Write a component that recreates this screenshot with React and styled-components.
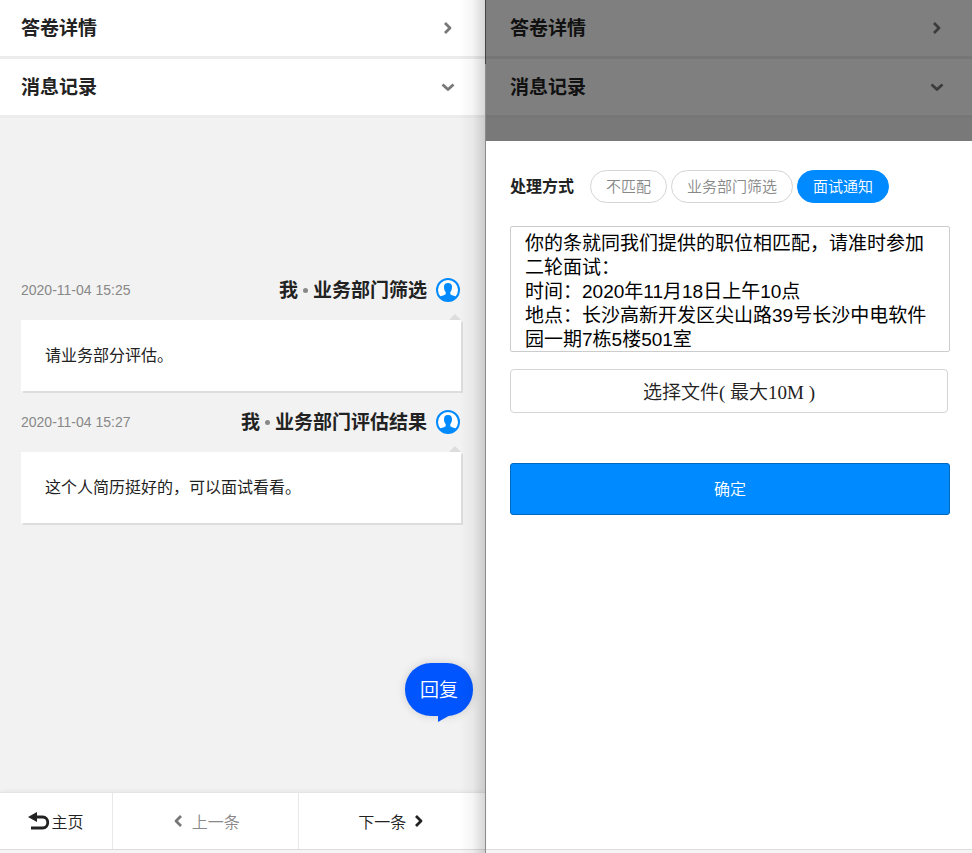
import React, { useState } from "react";
import styled, { createGlobalStyle } from "styled-components";

const GlobalStyle = createGlobalStyle`
  * {
    box-sizing: border-box;
  }

  body {
    margin: 0;
    color: #222;
    background-color: #fff;
    font-family: "Liberation Sans", "Noto Sans CJK SC", sans-serif;
  }

  button,
  textarea {
    margin: 0;
    color: inherit;
    font-family: inherit;
  }
`;

const Page = styled.main`
  display: grid;
  grid-template-columns: 1fr 1fr;
  min-height: 100vh;
`;

const Screen = styled.section`
  display: flex;
  flex-direction: column;
  min-width: 0;
`;

const MessageScreen = styled(Screen)`
  position: relative;
  padding-right: 1px;
  background-color: #f2f2f2;

  /* divider line and its soft shadow */
  &::after {
    content: "";
    position: absolute;
    top: 0;
    right: 0;
    bottom: 0;
    width: 27px;
    pointer-events: none;
    background:
      linear-gradient(#444 64px, #8c8c8c 64px) right / 1px 100% no-repeat,
      linear-gradient(
        to right,
        rgba(0, 0, 0, 0),
        rgba(0, 0, 0, 0.04) 50%,
        rgba(0, 0, 0, 0.17)
      );
  }
`;

const SectionButton = styled.button`
  display: flex;
  justify-content: space-between;
  align-items: center;
  width: 100%;
  height: 59px;
  padding: ${({ $inset }) => ($inset ? "0 28px 0 24px" : "0 30px 0 21px")};
  border: 0;
  border-bottom: 3px solid #ececec;
  background-color: #fff;
  cursor: pointer;
`;

const SectionTitle = styled.span`
  padding-bottom: 3px;
  font-size: 19px;
  font-weight: 600;
`;

const Backdrop = styled.div`
  position: relative;
  height: 141px;
  background-color: #f2f2f2;

  &::after {
    content: "";
    position: absolute;
    inset: 0;
    background-color: rgba(0, 0, 0, 0.5);
  }
`;

const Messages = styled.div`
  position: relative;
  flex: 1;
  display: flex;
  flex-direction: column;
  gap: 19px;
  padding: 160px 24px 0 21px;
`;

const Message = styled.article`
  display: flex;
  flex-direction: column;
  gap: 18px;
`;

const MessageHead = styled.header`
  display: flex;
  align-items: center;
  height: 24px;
  padding-right: 1px;
`;

const Time = styled.time`
  flex: 1;
  color: #888;
  font-size: 14px;
`;

const Author = styled.h3`
  display: flex;
  align-items: center;
  gap: 5px;
  margin: 0 9px 0 0;
  padding-bottom: 3px;
  font-size: 19px;
  font-weight: 600;
`;

const Dot = styled.span`
  width: 5px;
  height: 5px;
  margin-top: 4px;
  border-radius: 50%;
  background-color: #888;
`;

const Bubble = styled.p`
  position: relative;
  margin: 0;
  padding: 24px;
  background-color: #fff;
  box-shadow: 2px 2px 0 #ddd;
  font-size: 16px;
  line-height: 23px;

  &::before {
    content: "";
    position: absolute;
    right: 0;
    bottom: 100%;
    border: 6px solid transparent;
    border-top: 0;
    border-bottom-color: #ddd;
  }
`;

const ReplyButton = styled.button`
  position: absolute;
  right: 12px;
  bottom: 76px;
  width: 68px;
  height: 53px;
  padding: 0 0 2px;
  border: 0;
  border-radius: 26px;
  background-color: #0055ff;
  color: #fff;
  font-size: 19px;
  font-weight: 350;
  box-shadow: 0 0 10px rgba(0, 0, 0, 0.15);
  cursor: pointer;

  &::after {
    content: "";
    position: absolute;
    top: 51px;
    left: 33px;
    border-top: 8px solid #0055ff;
    border-right: 14px solid transparent;
  }
`;

const BottomNav = styled.nav`
  display: grid;
  grid-template-columns: 3fr 5fr 5fr;
  border-top: 1px solid #e4e4e4;
  background-color: #fff;
  box-shadow: 0 -1px 4px rgba(0, 0, 0, 0.05);
`;

const NavLink = styled.a`
  display: flex;
  justify-content: center;
  align-items: center;
  gap: ${({ $gap }) => $gap}px;
  height: 56px;
  border-left: 1px solid #e8e8e8;
  color: ${({ $muted }) => ($muted ? "#888" : "#222")};
  font-size: 16px;
  font-weight: 350;
  text-decoration: none;

  &:first-child {
    border-left: 0;
  }
`;

const PageEdge = styled.div`
  height: 4px;
  border-top: 1px solid #ddd;
  background-color: #f5f5f5;
`;

const Sheet = styled.form`
  flex: 1;
  display: flex;
  flex-direction: column;
  padding: 29px 22px 0 24px;
  background-color: #fff;
`;

const MethodRow = styled.div`
  display: flex;
  align-items: center;
  gap: 16px;
`;

const MethodLabel = styled.span`
  padding-bottom: 3px;
  font-size: 16px;
  font-weight: 600;
`;

const Chips = styled.div`
  display: flex;
  gap: 4px;
`;

const Chip = styled.label`
  position: relative;
  display: flex;
  align-items: center;
  height: 33px;
  padding: 0 15px 2px;
  border: 1px solid #d4d4d4;
  border-radius: 17px;
  color: #888;
  font-size: 15px;
  font-weight: 350;
  white-space: nowrap;
  cursor: pointer;

  &:has(input:checked) {
    border-color: #008aff;
    background-color: #008aff;
    color: #fff;
  }
`;

const ChipInput = styled.input`
  position: absolute;
  inset: 0;
  width: 100%;
  height: 100%;
  margin: 0;
  opacity: 0;
`;

const Notice = styled.textarea`
  height: 126px;
  margin-top: 23px;
  padding: 5px 14px 0;
  border: 1px solid #ccc;
  border-radius: 2px;
  background-color: #fff;
  color: #000;
  font-size: 19px;
  line-height: 24px;
  resize: none;
  overflow: hidden;
`;

const FileButton = styled.button`
  height: 44px;
  margin: 17px 2px 0 0;
  padding-bottom: 3px;
  border: 1px solid #d4d4d4;
  border-radius: 4px;
  background-color: #fff;
  font-family: "Liberation Serif", "Noto Sans CJK SC", serif;
  font-size: 19px;
  font-weight: 350;
  cursor: pointer;
`;

const SubmitButton = styled.button`
  height: 52px;
  margin-top: 50px;
  padding-bottom: 3px;
  border: 1px solid #0068bd;
  border-radius: 3px;
  background-color: #008aff;
  color: #fff;
  font-size: 16px;
  font-weight: 350;
  cursor: pointer;
`;

const chevrons = {
  right: "M4 2 L9 7 L4 12",
  left: "M9 2 L4 7 L9 12",
  down: "M1.500 4.500 L7 9.500 L12.500 4.500",
};

function Chevron({ direction, color = "#777" }) {
  return (
    <svg width="14" height="14" viewBox="0 0 14 14" aria-hidden="true">
      <path
        d={chevrons[direction]}
        fill="none"
        stroke={color}
        strokeWidth="2.8"
        strokeLinejoin="round"
      />
    </svg>
  );
}

function Avatar() {
  return (
    <svg width="24" height="24" viewBox="0 0 24 24" aria-hidden="true">
      <circle
        cx="12"
        cy="12"
        r="11"
        fill="#fff"
        stroke="#008aff"
        strokeWidth="2"
      />
      <path
        d="M12 5 C14.800 5 16 6.500 16 9 C16 11.500 15.300 13 14.300 14 V16 C15 17.500 18.500 17.200 20.500 19 A11.500 11.500 0 0 1 3.500 19 C5.500 17.200 9 17.500 9.700 16 V14 C8.700 13 8 11.500 8 9 C8 6.500 9.200 5 12 5 Z"
        fill="#008aff"
      />
    </svg>
  );
}

function BackArrow() {
  return (
    <svg width="22" height="20" viewBox="0 0 22 20" aria-hidden="true">
      <path d="M0 6 L9 1 V11 Z" fill="#222" />
      <path
        d="M7 6 H14.500 C21.500 6 21.500 17 14.500 17 H3"
        fill="none"
        stroke="#222"
        strokeWidth="2.8"
      />
    </svg>
  );
}

function Sections({ inset }) {
  return (
    <>
      <SectionButton type="button" $inset={inset}>
        <SectionTitle>答卷详情</SectionTitle>
        <Chevron direction="right" />
      </SectionButton>
      <SectionButton type="button" $inset={inset}>
        <SectionTitle>消息记录</SectionTitle>
        <Chevron direction="down" />
      </SectionButton>
    </>
  );
}

const messages = [
  { time: "2020-11-04 15:25", title: "业务部门筛选", text: "请业务部分评估。" },
  {
    time: "2020-11-04 15:27",
    title: "业务部门评估结果",
    text: "这个人简历挺好的\uff0c可以面试看看。",
  },
];

const methods = ["不匹配", "业务部门筛选", "面试通知"];

const defaultNotice = [
  "你的条就同我们提供的职位相匹配\uff0c请准时参加二轮面试\uff1a",
  "时间\uff1a2020年11月18日上午10点",
  "地点\uff1a长沙高新开发区尖山路39号长沙中电软件园一期7栋5楼501室",
].join("\n");

function App() {
  const [method, setMethod] = useState("面试通知");
  const [notice, setNotice] = useState(defaultNotice);

  return (
    <>
      <GlobalStyle />
      <Page lang="zh-CN">
        <MessageScreen>
          <Sections />
          <Messages>
            {messages.map((message) => (
              <Message key={message.time}>
                <MessageHead>
                  <Time>{message.time}</Time>
                  <Author>
                    我<Dot />
                    {message.title}
                  </Author>
                  <Avatar />
                </MessageHead>
                <Bubble>{message.text}</Bubble>
              </Message>
            ))}
            <ReplyButton type="button">回复</ReplyButton>
          </Messages>
          <BottomNav>
            <NavLink href="#home" $gap={1}>
              <BackArrow />
              主页
            </NavLink>
            <NavLink href="#prev" $gap={6} $muted>
              <Chevron direction="left" />
              上一条
            </NavLink>
            <NavLink href="#next" $gap={6}>
              下一条
              <Chevron direction="right" color="#222" />
            </NavLink>
          </BottomNav>
          <PageEdge />
        </MessageScreen>

        <Screen>
          <Backdrop>
            <Sections inset />
          </Backdrop>
          <Sheet onSubmit={(e) => e.preventDefault()}>
            <MethodRow role="radiogroup" aria-labelledby="method-label">
              <MethodLabel id="method-label">处理方式</MethodLabel>
              <Chips>
                {methods.map((name) => (
                  <Chip key={name}>
                    <ChipInput
                      type="radio"
                      name="method"
                      checked={method === name}
                      onChange={() => setMethod(name)}
                    />
                    {name}
                  </Chip>
                ))}
              </Chips>
            </MethodRow>
            <Notice
              aria-label="面试通知"
              value={notice}
              onChange={(e) => setNotice(e.target.value)}
            />
            <FileButton type="button">选择文件( 最大10M )</FileButton>
            <SubmitButton type="submit">确定</SubmitButton>
          </Sheet>
          <PageEdge />
        </Screen>
      </Page>
    </>
  );
}

export default App;
